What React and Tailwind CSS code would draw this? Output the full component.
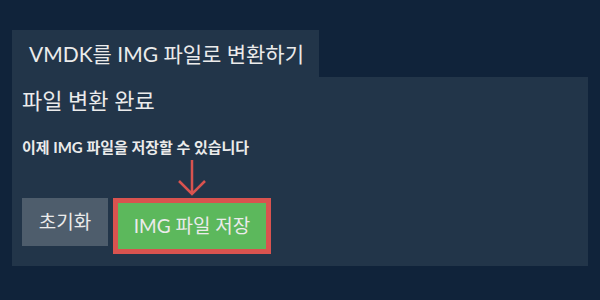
import React from 'react';

const font = { fontFamily: "Lato, 'Noto Sans CJK KR', sans-serif" };

export default function App() {
  return (
    <div className="w-[600px] h-[300px] bg-[#10233a] pt-[30px] px-3 text-[#ebebeb]" style={font}>
      {/* tab */}
      <div className="inline-flex items-center w-[307px] h-[47px] bg-[#223549] pl-[17px] text-[21px] leading-none">
        VMDK를 IMG 파일로 변환하기
      </div>

      {/* panel */}
      <div className="h-[189px] bg-[#223549] px-[10px] pt-[11px]">
        <h2 className="text-[22px] leading-[26px]">파일 변환 완료</h2>
        <p className="mt-[24px] text-[15px] font-bold leading-[18px]">이제 IMG 파일을 저장할 수 있습니다</p>

        <div className="flex items-start mt-[42px] gap-[5px]">
          <button className="w-[86px] h-[48px] bg-[#4e5d6c] text-[19px]">초기화</button>
          <div className="relative">
            <svg width="30" height="36" viewBox="0 0 30 36" className="absolute left-[64px] -top-[38px] text-[#d9534f]">
              <path d="M15 0V34M2 21L15 34L28 21" fill="none" stroke="currentColor" strokeWidth="2.5" />
            </svg>
            <button className="w-[158px] h-[56px] border-[5px] border-[#d9534f] bg-[#5cb85c] text-[19px]">
              IMG 파일 저장
            </button>
          </div>
        </div>
      </div>
    </div>
  );
}
